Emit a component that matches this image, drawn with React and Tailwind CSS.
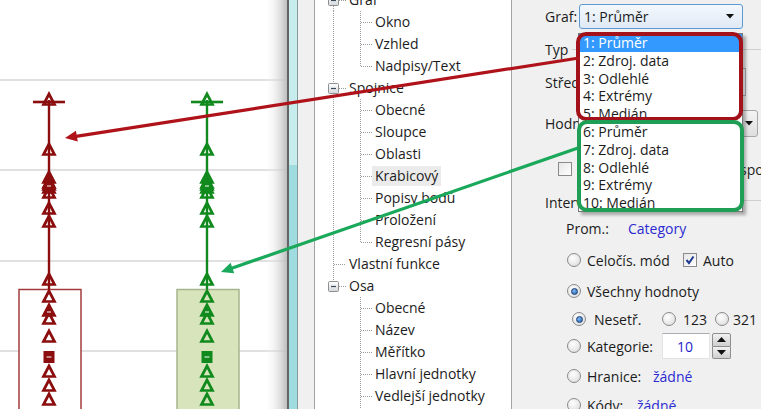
import React from 'react';

const RED = '#8b0d0d';
const GREEN = '#118a1d';

function Tri({ x, y, c, filled }) {
  return (
    <g>
      <polygon
        points={`${x},${y - 6} ${x - 5.5},${y + 4.5} ${x + 5.5},${y + 4.5}`}
        fill={filled ? c : 'none'}
        stroke={c}
        strokeWidth="2.7"
      />
      {filled && <line x1={x - 2} y1={y + 1} x2={x + 2} y2={y + 1} stroke="#fff" strokeWidth="1" />}
    </g>
  );
}

function Series({ cx, c, boxFill, boxStroke }) {
  const tris = [100, 150, 178, 183, 188, 193, 209, 222, 280, 297, 319, 337, 372, 386, 400];
  return (
    <g>
      <rect x={cx - 30} y={289.5} width={62} height={140} fill={boxFill} stroke={boxStroke} strokeWidth="1.5" />
      <line x1={cx} y1={100} x2={cx} y2={289} stroke={c} strokeWidth="2.4" />
      <line x1={cx - 16} y1={102} x2={cx + 16} y2={102} stroke={c} strokeWidth="2.6" />
      {tris.map((y, i) => (
        <Tri key={i} x={cx} y={y} c={c} />
      ))}
      <Tri x={cx} y={185} c={c} filled />
      <Tri x={cx} y={311} c={c} filled />
      <rect x={cx - 5.5} y={351} width={11} height={12} fill={c} />
      <line x1={cx - 2.5} y1={357} x2={cx + 2.5} y2={357} stroke="#fff" strokeWidth="1" />
    </g>
  );
}

function Chart() {
  return (
    <svg width="287" height="409" viewBox="0 0 287 409" className="block">
      <defs>
        <linearGradient id="edge" x1="0" x2="1" y1="0" y2="0">
          <stop offset="0" stopColor="#ffffff" stopOpacity="0" />
          <stop offset="1" stopColor="#bdbdbd" stopOpacity="1" />
        </linearGradient>
      </defs>
      <rect x="0" y="0" width="287" height="409" fill="#fff" />
      {[80, 170, 261, 351].map((y) => (
        <line key={y} x1="0" y1={y} x2="287" y2={y} stroke="#d6d6d6" strokeWidth="1.5" />
      ))}
      <Series cx={49} c={RED} boxFill="#ffffff" boxStroke="#a23c3c" />
      <Series cx={207} c={GREEN} boxFill="#d8e4bc" boxStroke="#a6b68c" />
      <rect x="264" y="0" width="23" height="409" fill="url(#edge)" />
    </svg>
  );
}

const tree = [
  { t: 'Graf', l: 1, exp: true, v1: 'bottom' },
  { t: 'Okno', l: 2, v1: 'full', v2: 'full' },
  { t: 'Vzhled', l: 2, v1: 'full', v2: 'full' },
  { t: 'Nadpisy/Text', l: 2, v1: 'full', v2: 'top' },
  { t: 'Spojnice', l: 1, exp: true, v1: 'full' },
  { t: 'Obecné', l: 2, v1: 'full', v2: 'full' },
  { t: 'Sloupce', l: 2, v1: 'full', v2: 'full' },
  { t: 'Oblasti', l: 2, v1: 'full', v2: 'full' },
  { t: 'Krabicový', l: 2, v1: 'full', v2: 'full', sel: true },
  { t: 'Popisy bodů', l: 2, v1: 'full', v2: 'full' },
  { t: 'Proložení', l: 2, v1: 'full', v2: 'full' },
  { t: 'Regresní pásy', l: 2, v1: 'full', v2: 'top' },
  { t: 'Vlastní funkce', l: 1, v1: 'full' },
  { t: 'Osa', l: 1, exp: true, v1: 'top' },
  { t: 'Obecné', l: 2, v2: 'full' },
  { t: 'Název', l: 2, v2: 'full' },
  { t: 'Měřítko', l: 2, v2: 'full' },
  { t: 'Hlavní jednotky', l: 2, v2: 'full' },
  { t: 'Vedlejší jednotky', l: 2, v2: 'full' },
  { t: 'Popisy', l: 2, v2: 'full' },
];

function vSeg(x, kind) {
  if (!kind) return null;
  const y1 = kind === 'bottom' ? 11 : 0;
  const y2 = kind === 'top' ? 11 : 22;
  return <line x1={x} y1={y1} x2={x} y2={y2} stroke="#9c9c9c" strokeWidth="1" strokeDasharray="1 1" />;
}

function TreeRow({ r }) {
  const w = r.l === 1 ? 31 : 57;
  return (
    <div className="flex h-[22px] items-center">
      <svg width={w} height="22" className="block shrink-0">
        {vSeg(18.5, r.v1)}
        {r.l === 2 && vSeg(45.5, r.v2)}
        {r.l === 2 && (
          <line x1="46" y1="11.5" x2="57" y2="11.5" stroke="#9c9c9c" strokeWidth="1" strokeDasharray="1 1" />
        )}
        {r.l === 1 && !r.exp && (
          <line x1="19" y1="11.5" x2="31" y2="11.5" stroke="#9c9c9c" strokeWidth="1" strokeDasharray="1 1" />
        )}
        {r.l === 1 && r.exp && (
          <g>
            <line x1="24" y1="11.5" x2="31" y2="11.5" stroke="#9c9c9c" strokeWidth="1" strokeDasharray="1 1" />
            <defs>
              <linearGradient id="expg" x1="0" x2="0" y1="0" y2="1">
                <stop offset="0" stopColor="#ffffff" />
                <stop offset="1" stopColor="#d4d8dc" />
              </linearGradient>
            </defs>
            <rect x="13.5" y="6.5" width="10" height="10" rx="1" fill="url(#expg)" stroke="#8e8f8f" />
            <line x1="16" y1="11.5" x2="21" y2="11.5" stroke="#3a4a5a" strokeWidth="1.2" />
          </g>
        )}
      </svg>
      <span className={`px-[3px] leading-[20px] whitespace-nowrap ${r.sel ? 'bg-[#ebebeb]' : ''}`}>{r.t}</span>
    </div>
  );
}

function Radio({ on }) {
  return (
    <span className="relative inline-flex h-[14px] w-[14px] shrink-0 items-center justify-center rounded-full border border-[#8a8a8a] bg-[radial-gradient(circle_at_40%_35%,#ffffff,#d8d8d8)]">
      {on && (
        <span className="h-[7px] w-[7px] rounded-full border border-[#1b3f73] bg-[radial-gradient(circle_at_40%_35%,#7fb6f0,#1f5fae)]" />
      )}
    </span>
  );
}

function Check({ on }) {
  return (
    <span className="inline-flex h-[14px] w-[14px] shrink-0 items-center justify-center border border-[#8a8a8a] bg-[linear-gradient(135deg,#e6e6e6,#ffffff)]">
      {on && (
        <svg width="10" height="10" viewBox="0 0 10 10">
          <path d="M1.5 5 L4 8 L8.5 1.5" fill="none" stroke="#1d3a8f" strokeWidth="2" />
        </svg>
      )}
    </span>
  );
}

function DownArrow() {
  return (
    <svg width="8" height="5" viewBox="0 0 8 5" className="block">
      <polygon points="0,0 8,0 4,4.5" fill="#111" />
    </svg>
  );
}

function RightPanel() {
  return (
    <div className="flex flex-col pl-[33px] pt-[4px] text-[#1c1c1c]">
      {/* Graf */}
      <div className="flex h-[25px] items-center">
        <span className="w-[34px]">Graf:</span>
        <div className="flex h-[25px] w-[164px] items-center justify-between rounded-[3px] border border-[#5b9bd5] bg-[linear-gradient(#f4f8fd,#dfe9f5)] pl-[4px] pr-[8px]">
          <span>1: Průměr</span>
          <DownArrow />
        </div>
      </div>
      {/* Typ */}
      <div className="mt-[9px] flex h-[22px] items-center">
        <span>Typ</span>
        <div className="ml-[4px] flex-1 border-t border-[#cfcfcf]" />
      </div>
      {/* Střed */}
      <div className="mt-[8px] flex h-[28px] items-center">
        <span className="w-[55px]">Střed</span>
        <div className="h-[28px] w-[146px] border border-[#abadb3] bg-white" />
      </div>
      {/* Hodnoty */}
      <div className="mt-[14px] flex h-[27px] items-center">
        <span className="w-[70px]">Hodnoty</span>
        <div className="flex h-[27px] w-[143px] items-center justify-end rounded-[3px] border border-[#a8a8a8] bg-[linear-gradient(#f4f4f4,#dedede)] pr-[4px]">
          <DownArrow />
        </div>
      </div>
      {/* checkbox row */}
      <div className="mt-[22px] flex h-[20px] items-center overflow-hidden whitespace-nowrap pl-[13px]">
        <Check />
        <span className="ml-[6px] inline-block w-[162px] shrink-0">Zobrazit</span>
        <span>spojnice</span>
      </div>
      {/* Interval */}
      <div className="mt-[13px] flex h-[20px] items-center">
        <span>Interval</span>
        <div className="ml-[4px] mt-[-4px] flex-1 border-t border-[#cfcfcf]" />
      </div>
      {/* Prom */}
      <div className="mt-[6px] flex h-[20px] items-center pl-[21px]">
        <span className="w-[62px]">Prom.:</span>
        <span className="text-[#2b2bd0]">Category</span>
      </div>
      {/* Celočís */}
      <div className="mt-[11px] flex h-[22px] items-center pl-[22px]">
        <Radio />
        <span className="ml-[6px] w-[96px]">Celočís. mód</span>
        <Check on />
        <span className="ml-[6px]">Auto</span>
      </div>
      {/* Všechny hodnoty */}
      <div className="mt-[9px] flex h-[22px] items-center pl-[22px]">
        <Radio on />
        <span className="ml-[6px]">Všechny hodnoty</span>
      </div>
      {/* Nesetř */}
      <div className="mt-[6px] flex h-[22px] items-center whitespace-nowrap pl-[27px]">
        <Radio on />
        <span className="ml-[8px] w-[68px] shrink-0">Nesetř.</span>
        <Radio />
        <span className="ml-[7px] w-[32px] shrink-0">123</span>
        <Radio />
        <span className="ml-[4px]">321</span>
      </div>
      {/* Kategorie */}
      <div className="mt-[3px] flex h-[26px] items-center pl-[22px]">
        <Radio />
        <span className="ml-[6px] w-[75px] shrink-0">Kategorie:</span>
        <div className="flex h-[26px] w-[48px] items-center border border-[#e3e3e3] border-t-[#abadb3] bg-white pl-[14px] text-[#1f1fcf]">
          10
        </div>
        <div className="ml-[2px] flex h-[26px] w-[19px] flex-col">
          <div className="flex flex-1 items-center justify-center rounded-t-[2px] border border-[#8e8e8e] bg-[linear-gradient(#f2f2f2,#cfcfcf)]">
            <svg width="9" height="5" viewBox="0 0 9 5"><polygon points="0,5 9,5 4.5,0" fill="#111" /></svg>
          </div>
          <div className="flex flex-1 items-center justify-center rounded-b-[2px] border border-t-0 border-[#8e8e8e] bg-[linear-gradient(#f2f2f2,#cfcfcf)]">
            <svg width="9" height="5" viewBox="0 0 9 5"><polygon points="0,0 9,0 4.5,5" fill="#111" /></svg>
          </div>
        </div>
      </div>
      {/* Hranice */}
      <div className="mt-[6px] flex h-[22px] items-center pl-[22px]">
        <Radio />
        <span className="ml-[6px] w-[66px] shrink-0">Hranice:</span>
        <span className="text-[#2b2bd0]">žádné</span>
      </div>
      {/* Kódy */}
      <div className="mt-[7px] flex h-[22px] items-center pl-[22px]">
        <Radio />
        <span className="ml-[6px] w-[50px] shrink-0">Kódy:</span>
        <span className="text-[#2b2bd0]">žádné</span>
      </div>
    </div>
  );
}

const items = [
  '1: Průměr',
  '2: Zdroj. data',
  '3: Odlehlé',
  '4: Extrémy',
  '5: Medián',
  '6: Průměr',
  '7: Zdroj. data',
  '8: Odlehlé',
  '9: Extrémy',
  '10: Medián',
];

export default function App() {
  return (
    <div className="relative flex h-[409px] w-[761px] overflow-hidden bg-white font-['Open_Sans',sans-serif] text-[14px] text-[#1c1c1c]">
      <div className="w-[287px] shrink-0">
        <Chart />
      </div>
      <div className="w-[2px] shrink-0 bg-[#646464]" />
      <div className="flex w-[8px] shrink-0 flex-col">
        <div className="h-[165px] bg-[#c6ecee]" />
        <div className="flex-1 bg-[#9fdce0]" />
      </div>
      <div className="w-[1px] shrink-0 bg-[#86999b]" />
      <div className="w-[16px] shrink-0 bg-[#f0f0f0]" />
      <div className="w-[1px] shrink-0 bg-[#a3a3a3]" />
      <div className="w-[196px] shrink-0 overflow-hidden bg-white">
        <div className="-mt-[11px] flex flex-col">
          {tree.map((r, i) => (
            <TreeRow key={i} r={r} />
          ))}
        </div>
      </div>
      <div className="w-[1px] shrink-0 bg-[#a3a3a3]" />
      <div className="flex-1 overflow-hidden bg-[#f0f0f0]">
        <RightPanel />
      </div>

      {/* dropdown list overlay */}
      <div className="absolute left-[578px] top-[33px] flex h-[179px] w-[165px] flex-col border border-[#767676] bg-white shadow-[3px_3px_3px_rgba(0,0,0,0.3)]">
        {items.map((t, i) => (
          <div
            key={i}
            className={`h-[17.8px] whitespace-nowrap pl-[4px] leading-[17.8px] ${i === 0 ? 'bg-[#3399ff] text-white' : ''}`}
          >
            {t}
          </div>
        ))}
      </div>

      {/* highlight frames */}
      <div className="absolute left-[576px] top-[32px] h-[89px] w-[167px] rounded-[10px] border-[4px] border-[#a3121b]" />
      <div className="absolute left-[577px] top-[120px] h-[92px] w-[167px] rounded-[10px] border-[4px] border-[#1f9e55]" />

      {/* arrows */}
      <svg className="pointer-events-none absolute left-0 top-0" width="761" height="409" viewBox="0 0 761 409">
        <line x1="579" y1="58" x2="76" y2="136.3" stroke="#b0121a" strokeWidth="3.2" />
        <polygon points="65,138 77.8,141.6 75.9,130.8" fill="#b0121a" />
        <line x1="578" y1="148" x2="231" y2="268.5" stroke="#1aa85a" strokeWidth="3.2" />
        <polygon points="221,272 234.2,273.2 230.6,262.8" fill="#1aa85a" />
      </svg>
    </div>
  );
}
